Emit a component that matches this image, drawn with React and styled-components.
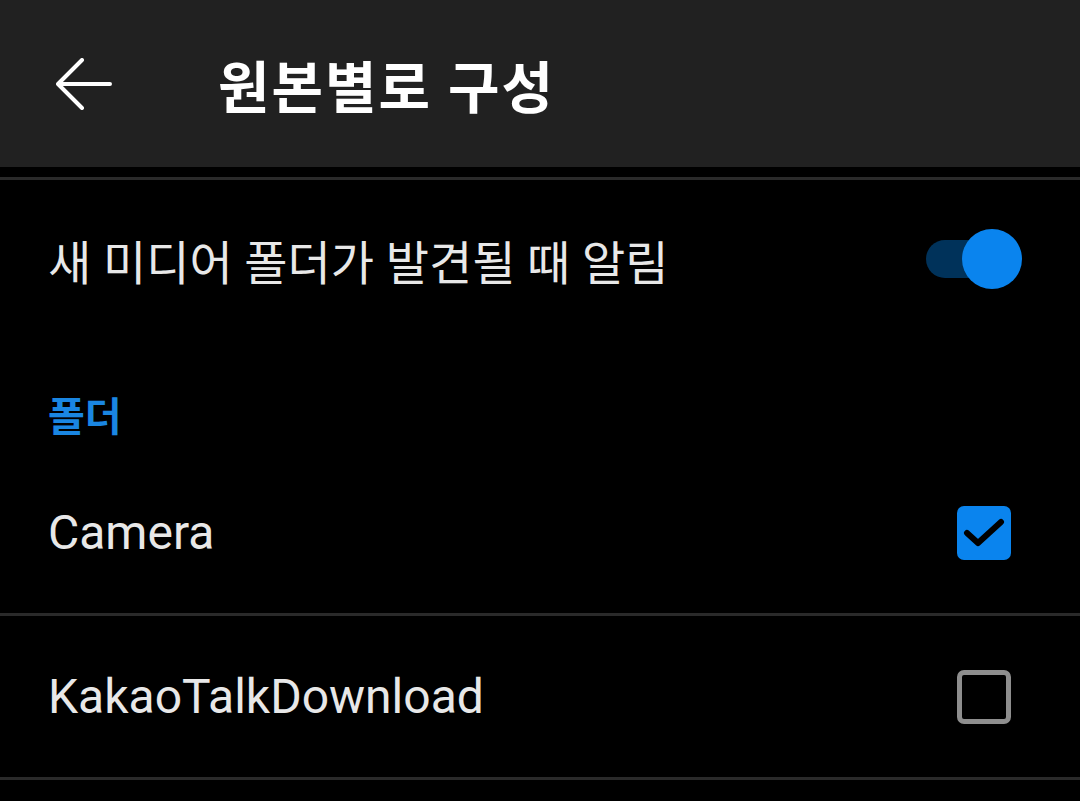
import React from "react";
import styled, { createGlobalStyle } from "styled-components";

const Global = createGlobalStyle`
  html, body { margin: 0; padding: 0; background: #000; }
  body { font-family: Roboto, "Noto Sans CJK KR", sans-serif; }
  * { box-sizing: border-box; }
`;

const Screen = styled.div`
  width: 1080px;
  height: 801px;
  background: #000;
  overflow: hidden;
  display: flex;
  flex-direction: column;
`;

const Header = styled.header`
  height: 167px;
  background: #212121;
  display: flex;
  align-items: center;
  padding-left: 56px;
  flex-shrink: 0;
`;

const BackButton = styled.button`
  width: 56px;
  height: 52px;
  padding: 0;
  border: 0;
  background: none;
  display: flex;
  align-items: center;
  justify-content: center;
  margin-right: 106px;
`;

const Title = styled.h1`
  margin: 0;
  font-family: Roboto, "Noto Sans CJK KR", sans-serif;
  font-weight: 700;
  font-size: 56px;
  color: #fff;
  letter-spacing: 2px;
`;

const Divider = styled.div`
  height: 3px;
  background: #2a2a2a;
  margin-top: ${(p) => p.$top || 0}px;
  flex-shrink: 0;
`;

const SwitchRow = styled.div`
  height: 158px;
  display: flex;
  align-items: center;
  justify-content: space-between;
  padding: 0 80px 0 48px;
  flex-shrink: 0;
`;

const Label = styled.span`
  font-size: ${(p) => p.$size || 47}px;
  color: #e8e8e8;
  font-weight: 400;
`;

const Track = styled.div`
  position: relative;
  width: 74px;
  height: 38px;
  border-radius: 19px;
  background: #00325a;
`;

const Thumb = styled.div`
  position: absolute;
  right: -22px;
  top: -11px;
  width: 60px;
  height: 60px;
  border-radius: 50%;
  background: #0a84ee;
`;

const SectionTitle = styled.div`
  height: 114px;
  padding: 52px 48px 0;
  line-height: 56px;
  font-size: 40px;
  font-weight: 700;
  color: #1a86e2;
  flex-shrink: 0;
`;

const Row = styled.div`
  height: 161px;
  display: flex;
  align-items: center;
  justify-content: space-between;
  padding: 0 69px 0 48px;
  flex-shrink: 0;
`;

const Box = styled.div`
  width: 54px;
  height: 54px;
  border-radius: 7px;
  display: flex;
  align-items: center;
  justify-content: center;
  background: ${(p) => (p.$checked ? "#0a84ee" : "transparent")};
  border: ${(p) => (p.$checked ? "none" : "5px solid #8e8e8e")};
`;

const BackIcon = () => (
  <svg width="56" height="52" viewBox="0 0 56 52" fill="none">
    <path
      d="M54 26H3M26 2L2 26l24 24"
      stroke="#fff"
      strokeWidth="4"
      strokeLinecap="round"
      strokeLinejoin="round"
    />
  </svg>
);

const Check = () => (
  <svg width="42" height="32" viewBox="0 0 42 32" fill="none">
    <path d="M4 16l11 10L38 5" stroke="#000" strokeWidth="6" strokeLinecap="round" strokeLinejoin="round" />
  </svg>
);

export default function App() {
  return (
    <Screen>
      <Global />
      <Header>
        <BackButton aria-label="뒤로">
          <BackIcon />
        </BackButton>
        <Title>원본별로 구성</Title>
      </Header>
      <Divider $top={10} />
      <SwitchRow>
        <Label>새 미디어 폴더가 발견될 때 알림</Label>
        <Track>
          <Thumb />
        </Track>
      </SwitchRow>
      <SectionTitle>폴더</SectionTitle>
      <Row>
        <Label $size={48}>Camera</Label>
        <Box $checked>
          <Check />
        </Box>
      </Row>
      <Divider />
      <Row>
        <Label $size={48}>KakaoTalkDownload</Label>
        <Box />
      </Row>
      <Divider />
    </Screen>
  );
}
